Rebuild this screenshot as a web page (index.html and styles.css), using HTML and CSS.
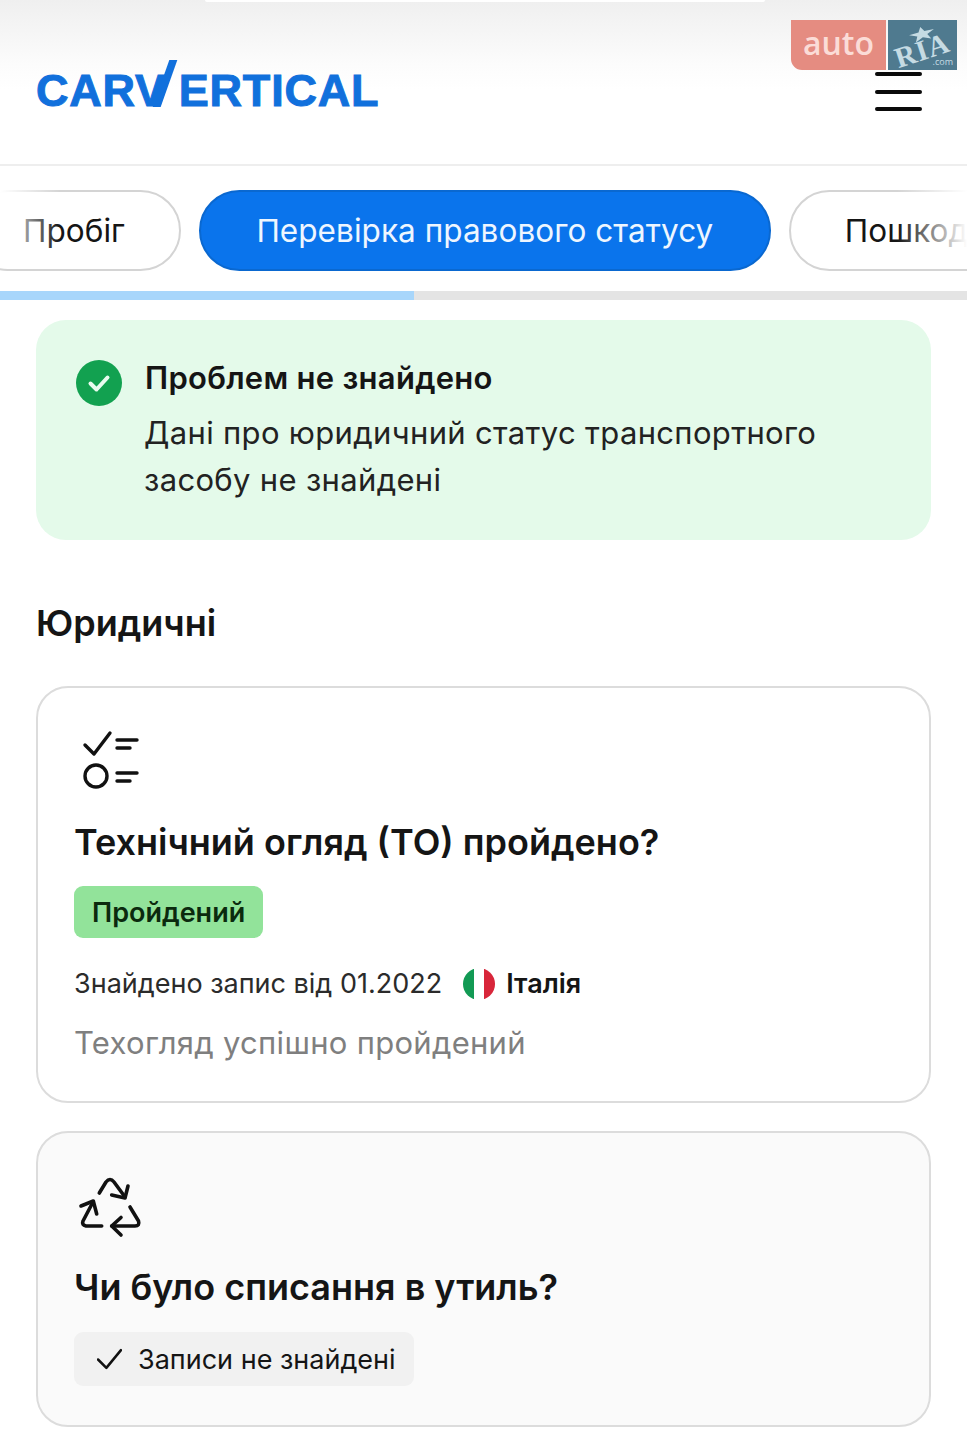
FILE: index.html
```html
<!DOCTYPE html>
<html lang="uk">
<head>
    <meta charset="UTF-8">
    <meta name="viewport" content="width=device-width, initial-scale=1.0">
    <title>carVertical</title>
    <link rel="stylesheet" href="styles.css">
</head>
<body>
    <header class="header">
        <div class="logo">CAR<span class="logo-v">V</span>ERTICAL</div>
        <button class="menu" aria-label="Menu"><span></span><span></span><span></span></button>
        <div class="watermark">
            <div class="wm-auto">auto</div>
            <div class="wm-ria">
                <svg class="wm-star" viewBox="0 0 24 24" preserveAspectRatio="none"><polygon points="12,1 14.6,8.6 23,9 16.4,13.8 18.8,22 12,17.2 5.2,22 7.6,13.8 1,9 9.4,8.6"/></svg>
                <span class="wm-ria-text">RIA</span>
                <span class="wm-com">.com</span>
            </div>
        </div>
    </header>

    <nav class="tabs-wrap">
        <div class="tabs">
            <div class="tab">Пробіг</div>
            <div class="tab active">Перевірка правового статусу</div>
            <div class="tab">Пошкодження</div>
        </div>
    </nav>
    <div class="progress"><div class="progress-fill"></div></div>

    <main class="content">
        <section class="notice">
            <svg class="notice-icon" viewBox="0 0 46 46">
                <circle cx="23" cy="23" r="23" fill="#12a150"/>
                <path d="M14.5 23.5l6 6 11-12" fill="none" stroke="#e9fbef" stroke-width="4" stroke-linecap="round" stroke-linejoin="round"/>
            </svg>
            <div>
                <h2 class="notice-title">Проблем не знайдено</h2>
                <p class="notice-text">Дані про юридичний статус транспортного засобу не знайдені</p>
            </div>
        </section>

        <h1 class="section-title">Юридичні</h1>

        <article class="card">
            <svg class="card-icon" viewBox="0 0 64 64">
                <path d="M5 17l9 9 16-21" fill="none" stroke="#111" stroke-width="3.4" stroke-linecap="round" stroke-linejoin="round"/>
                <path d="M37 12h20M37 20h13M37 45h20M37 53h13" fill="none" stroke="#111" stroke-width="3.4" stroke-linecap="round"/>
                <circle cx="16" cy="48" r="11" fill="none" stroke="#111" stroke-width="3.4"/>
            </svg>
            <h3 class="card-title">Технічний огляд (ТО) пройдено?</h3>
            <div class="badge">Пройдений</div>
            <div class="record">
                <span>Знайдено запис від 01.2022</span>
                <svg class="flag" viewBox="0 0 32 32">
                    <defs><clipPath id="flag-clip"><circle cx="16" cy="16" r="16"/></clipPath></defs>
                    <g clip-path="url(#flag-clip)">
                        <rect width="11" height="32" fill="#129a54"/>
                        <rect x="11" width="10" height="32" fill="#fff"/>
                        <rect x="21" width="11" height="32" fill="#d8263a"/>
                    </g>
                </svg>
                <strong>Італія</strong>
            </div>
            <p class="card-note">Техогляд успішно пройдений</p>
        </article>

        <article class="card muted">
            <svg class="card-icon" viewBox="0 0 64 64">
                <g fill="none" stroke="#111" stroke-width="3.6" stroke-linecap="round" stroke-linejoin="round">
                    <path d="M19.3 20L26 9Q30 4 34 9L45 24"/>
                    <path d="M31.7 22L45 25L48 13"/>
                    <path d="M21.7 53H6Q1.5 52 3 48L13 29"/>
                    <path d="M1 33L13.3 28L16.7 41"/>
                    <path d="M50 34L58.5 48Q60 53 55 53H31.7"/>
                    <path d="M41 44.500L31.700 53L41 62"/>
                </g>
            </svg>
            <h3 class="card-title">Чи було списання в утиль?</h3>
            <div class="chip">
                <svg class="chip-check" viewBox="0 0 24 24"><path d="M1 12l8 8L23 3" fill="none" stroke="#111" stroke-width="2.4" stroke-linecap="round" stroke-linejoin="round"/></svg>
                Записи не знайдені
            </div>
        </article>
    </main>
</body>
</html>
```

FILE: styles.css
```css
* {
    box-sizing: border-box;
}
body {
    margin: 0;
    font-family: Inter, "Noto Sans", sans-serif;
    color: #151515;
    background: white;
    overflow-x: hidden;
}
.header {
    position: relative;
    height: 166px;
    padding: 58px 45px 0 36px;
    display: flex;
    justify-content: space-between;
    align-items: flex-start;
    border-bottom: 2px solid #eeeeee;
    background: linear-gradient(#efefef 0, #f5f5f5 30px, #fcfcfc 65px, white 90px);
}
.header::before {
    content: "";
    position: absolute;
    top: 0;
    left: 205px;
    width: 560px;
    height: 2px;
    border-radius: 0 0 4px 4px;
    background: white;
}
.logo {
    font-family: "Liberation Sans", Arial, sans-serif;
    font-weight: 700;
    font-size: 45px;
    line-height: 66px;
    letter-spacing: 0.8px;
    color: #1170dc;
    -webkit-text-stroke: 1px #1170dc;
    white-space: nowrap;
}
.logo-v {
    position: relative;
    display: inline-block;
    margin: 0 13px 0 -1px;
}
.logo-v::after {
    content: "";
    position: absolute;
    left: 26px;
    top: 2px;
    width: 8px;
    height: 47px;
    background: #1170dc;
    transform: skewX(-19.5deg);
}
.menu {
    margin-top: 14px;
    width: 47px;
    height: 39px;
    padding: 0;
    border: none;
    background: none;
    display: flex;
    flex-direction: column;
    justify-content: space-between;
}
.menu span {
    display: block;
    height: 4px;
    border-radius: 2px;
    background: #0a0a0a;
}
.watermark {
    position: absolute;
    top: 20px;
    right: 10px;
    display: flex;
    gap: 2px;
    height: 50px;
}
.wm-auto {
    width: 95px;
    border-bottom-left-radius: 11px;
    background: #e58c81;
    color: #fbdcd7;
    font-family: "Open Sans", sans-serif;
    font-size: 32px;
    font-weight: 600;
    line-height: 46px;
    text-align: center;
}
.wm-ria {
    position: relative;
    width: 69px;
    background: #4f7a8f;
    color: #c5dbe3;
}
.wm-star {
    position: absolute;
    top: 6px;
    left: 20px;
    width: 28px;
    height: 16px;
    fill: #c5dbe3;
    transform: rotate(-14deg);
}
.wm-ria-text {
    position: absolute;
    left: 6px;
    top: 15px;
    font-family: "Liberation Serif", serif;
    font-weight: 700;
    font-size: 29px;
    line-height: 30px;
    letter-spacing: 1px;
    transform: rotate(-18deg);
}
.wm-com {
    position: absolute;
    right: 4px;
    bottom: 2px;
    font-family: "Open Sans", sans-serif;
    font-size: 9px;
}
.tabs-wrap {
    position: relative;
    padding-top: 24px;
    height: 125px;
    overflow: hidden;
}
.tabs-wrap::before,
.tabs-wrap::after {
    content: "";
    position: absolute;
    top: 20px;
    bottom: 30px;
    z-index: 1;
}
.tabs-wrap::before {
    left: 0;
    width: 60px;
    background: linear-gradient(to right, white, rgba(255,255,255,0));
}
.tabs-wrap::after {
    right: 0;
    width: 70px;
    background: linear-gradient(to left, white, rgba(255,255,255,0));
}
.tabs {
    display: flex;
    gap: 18px;
    margin-left: -33px;
}
.tab {
    flex: none;
    height: 81px;
    padding: 0 54px;
    border: 2px solid #d4d4d4;
    border-radius: 41px;
    font-size: 31.5px;
    letter-spacing: 0.05px;
    line-height: 77px;
    white-space: nowrap;
}
.tab.active {
    padding: 0 55.5px;
    border-color: #0a68d0;
    background: #0a74ec;
    color: #eef6ff;
}
.progress {
    height: 9px;
    background: #e4e4e4;
}
.progress-fill {
    width: 414px;
    height: 100%;
    background: #a8d6fb;
}
.content {
    padding: 20px 36px 0;
}
.notice {
    display: flex;
    gap: 23px;
    height: 220px;
    padding: 32px 40px;
    border-radius: 30px;
    background: #e4faea;
}
.notice-icon {
    flex: none;
    width: 46px;
    height: 46px;
    margin-top: 8px;
}
.notice-title {
    margin: 0;
    font-size: 31px;
    font-weight: 600;
    letter-spacing: 0.27px;
    line-height: 52px;
}
.notice-text {
    margin: 5px 0 0 -1px;
    font-size: 31px;
    line-height: 47px;
    letter-spacing: 0.33px;
    color: #222;
}
.section-title {
    margin: 57px 0 37px;
    font-size: 36px;
    font-weight: 600;
    line-height: 52px;
}
.card {
    margin-bottom: 28px;
    padding: 40px 36px 0;
    height: 417px;
    border: 2px solid #dcdcdc;
    border-radius: 32px;
    background: white;
}
.card.muted {
    height: 296px;
    background: #fafafa;
}
.card-icon {
    display: block;
    width: 64px;
    height: 64px;
    margin-left: 6px;
    overflow: visible;
}
.card-title {
    margin: 24px 0 18px;
    font-size: 36px;
    font-weight: 600;
    line-height: 52px;
}
.muted .card-title {
    margin-bottom: 19px;
}
.badge {
    display: inline-block;
    height: 52px;
    padding: 0 18px;
    border-radius: 9px;
    background: #92e39a;
    color: #0b2a0e;
    font-size: 27px;
    font-weight: 600;
    line-height: 54px;
}
.record {
    display: flex;
    align-items: center;
    margin-top: 29px;
    font-size: 27px;
    line-height: 34px;
    color: #2b2b2b;
}
.flag {
    width: 32px;
    height: 32px;
    margin: 0 11px 0 21px;
}
.record strong {
    font-weight: 600;
    color: #151515;
}
.card-note {
    margin: 20px 0 0;
    font-size: 31px;
    line-height: 44px;
    letter-spacing: 0.28px;
    color: #7f7f7f;
}
.chip {
    display: inline-flex;
    align-items: center;
    gap: 16px;
    height: 54px;
    padding: 0 18px 0 23px;
    border-radius: 9px;
    background: #f1f1f1;
    font-size: 27px;
}
.chip-check {
    width: 25px;
    height: 25px;
}
```
